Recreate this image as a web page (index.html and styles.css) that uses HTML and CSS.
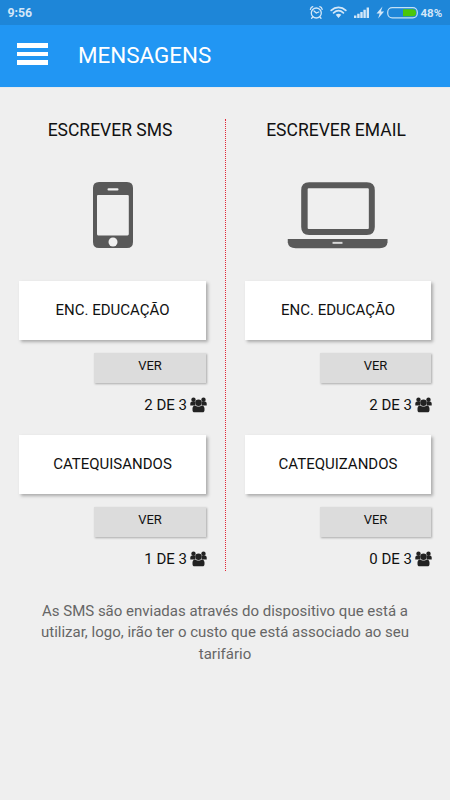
FILE: index.html
```html
<!DOCTYPE html>
<html lang="pt">
<head>
<meta charset="utf-8">
<title>Mensagens</title>
<link rel="stylesheet" href="styles.css">
</head>
<body>
<svg class="defs" aria-hidden="true">
  <symbol id="people" viewBox="0 0 17 16">
    <circle cx="3.500" cy="2.700" r="2.200"/><circle cx="13.500" cy="2.700" r="2.200"/>
    <path d="M.3 8.600V6.600C.3 5.200 1 4.700 2 4.700h3.200v3.900zM16.700 8.600V6.600c0-1.400-.7-1.900-1.700-1.900h-3.200v3.900z"/>
    <circle cx="8.500" cy="5.800" r="3.300"/>
    <path d="M2.500 13v-1.400c0-1.700.8-3.100 2.700-3.100.8.7 2 1.100 3.300 1.100s2.500-.4 3.300-1.100c1.900 0 2.700 1.400 2.700 3.100V13c0 1.500-.7 2.300-2 2.300h-8c-1.300 0-2-.8-2-2.300z"/>
  </symbol>
</svg>
<div class="status">
  <span class="time">9:56</span>
  <svg class="indicators" viewBox="0 0 110 25">
    <g fill="none" stroke="#d3e7f8" stroke-width="1.300" stroke-linecap="round">
      <circle cx="8.300" cy="13" r="5"/><path d="M8.300 13l-2.300-2M8.300 13l2.500-1M2.400 9.300q.5-2 2.400-2.600M14.200 9.300q-.5-2-2.400-2.600M4.800 17l-1.200 1.300M11.800 17l1.200 1.300"/>
      <path d="M23.200 10.400c4.300-4 10.300-4 14.600 0M25.600 12.800c3-2.700 6.800-2.700 9.800 0" stroke-width="1.800"/>
    </g>
    <path fill="#d3e7f8" d="M27.700 14.800q2.800-2 5.600 0L30.500 18zM46 15.500h2.400V18H46zM49.200 13.800h2.400V18h-2.400zM52.300 12h2.400v6h-2.400zM55.400 9.800h2.400V18h-2.400zM58.600 7.500h2.400V18h-2.400zM74.500 6.500l-6 7h3.200l-1.600 5 6-7h-3.200z"/>
    <rect x="79.700" y="7.700" width="29.600" height="10.100" rx="4.500" fill="none" stroke="#c4e1f5" stroke-width="1.200"/>
    <path fill="#4ac60b" d="M95 9.200h9.800q3.300 0 3.300 3.500t-3.300 3.500H95z"/>
  </svg>
  <span class="percent">48%</span>
</div>
<header class="toolbar">
  <div class="menu"><i></i><i></i><i></i></div>
  <h1>MENSAGENS</h1>
</header>
<main>
  <div class="columns">
    <section class="column">
      <h2>ESCREVER SMS</h2>
      <svg class="device" viewBox="0 0 188 70">
        <path fill="#595959" fill-rule="evenodd" d="M80 1h28q6 0 6 6v54q0 6-6 6H80q-6 0-6-6V7q0-6 6-6zM79 14q-1 0-1 1v38q0 1.400 1 1.400h29.500q1.300 0 1.300-1.400V15q0-1-1.300-1z"/>
        <rect x="88.500" y="7.300" width="11" height="2.200" rx="1.100" fill="#f0f0f0"/><circle cx="94" cy="61" r="4.500" fill="#f0f0f0"/>
      </svg>
      <div class="card">ENC. EDUCAÇÃO</div>
      <div class="view">VER</div>
      <div class="count">2 DE 3 <svg><use href="#people"/></svg></div>
      <div class="card next">CATEQUISANDOS</div>
      <div class="view">VER</div>
      <div class="count">1 DE 3 <svg><use href="#people"/></svg></div>
    </section>
    <section class="column">
      <h2>ESCREVER EMAIL</h2>
      <svg class="device" viewBox="0 0 187 70">
        <path fill="#595959" fill-rule="evenodd" d="M64.500 1h58q8 0 8 8v37q0 8-8 8h-58q-8 0-8-8V9q0-8 8-8zM64 7q-1 0-1 1v39q0 1 1 1h59.500q1 0 1-1V8q0-1-1-1z"/>
        <path fill="#595959" d="M43 58h100.300v3.500q-.5 6-8 6H51q-7.500 0-8-6z"/><path fill="#d8d8d8" d="M88 61h10v2H88z"/>
      </svg>
      <div class="card">ENC. EDUCAÇÃO</div>
      <div class="view">VER</div>
      <div class="count">2 DE 3 <svg><use href="#people"/></svg></div>
      <div class="card next">CATEQUIZANDOS</div>
      <div class="view">VER</div>
      <div class="count">0 DE 3 <svg><use href="#people"/></svg></div>
    </section>
  </div>
  <p>As SMS são enviadas através do dispositivo que está a utilizar, logo, irão ter o custo que está associado ao seu tarifário</p>
</main>
</body>
</html>
```
FILE: styles.css
```css
* { box-sizing: border-box; }
body { margin: 0; height: 800px; background: #efefef; color: #111; font-family: Roboto, sans-serif; overflow: hidden; }
.defs { position: absolute; width: 0; height: 0; }
.status { height: 25px; display: flex; align-items: center; padding: 0 8px 0 7.500px; background: #1e86d8; color: #d3e7f8; font-size: 12px; font-weight: 700; }
.time { flex: 1; font-size: 12.300px; }
.indicators { width: 110px; height: 25px; margin-right: 3px; }
.percent { width: 21.500px; font-size: 11.500px; white-space: nowrap; }
.toolbar { height: 63px; display: flex; align-items: center; background: #2196f3; padding: 0 17px; border-bottom: 1px solid #e6eaee; }
.menu { display: grid; gap: 4px; width: 31px; margin-top: -4px; }
.menu i { height: 4.500px; background: #fff; }
h1 { margin: -2px 0 0 30px; color: #fff; font-size: 22.400px; font-weight: 400; }
main { padding-top: 31px; }
.columns { display: grid; grid-template-columns: 226px 224px; height: 452px; }
.column { padding: 0 19px; }
.column:first-child { padding-right: 18px; border-right: 1px dotted #e32636; }
h2 { margin: 0 -2px 0 -6px; height: 62px; font-size: 17.500px; font-weight: 400; line-height: 23px; text-align: center; }
.column:first-child h2 { padding-right: 2px; }
.device { display: block; width: 100%; height: 70px; }
.card { width: 187px; height: 59px; margin-top: 30px; background: #fff; box-shadow: 2px 2px 3px #aaa; text-align: center; font-size: 15px; line-height: 58px; }
.column:last-child .card { width: 186px; }
.card.next { margin-top: 19px; }
.view { width: 112px; height: 30px; margin: 13px 1px 0 auto; background: #dcdcdc; box-shadow: 1px 1px 2px #aaa; text-align: center; font-size: 13px; line-height: 26px; }
.column:last-child .view { width: 111px; margin-right: 0; }
.count { display: flex; justify-content: flex-end; gap: 3px; align-items: center; height: 22px; margin: 11px -1px 0 0; font-size: 15px; }
.column:first-child .count { margin-right: 0; }
.count svg { width: 17px; height: 16px; fill: #222; }
p { width: 390px; margin: 30px auto 0; color: #666; font-size: 15px; line-height: 21.300px; text-align: center; }
```
